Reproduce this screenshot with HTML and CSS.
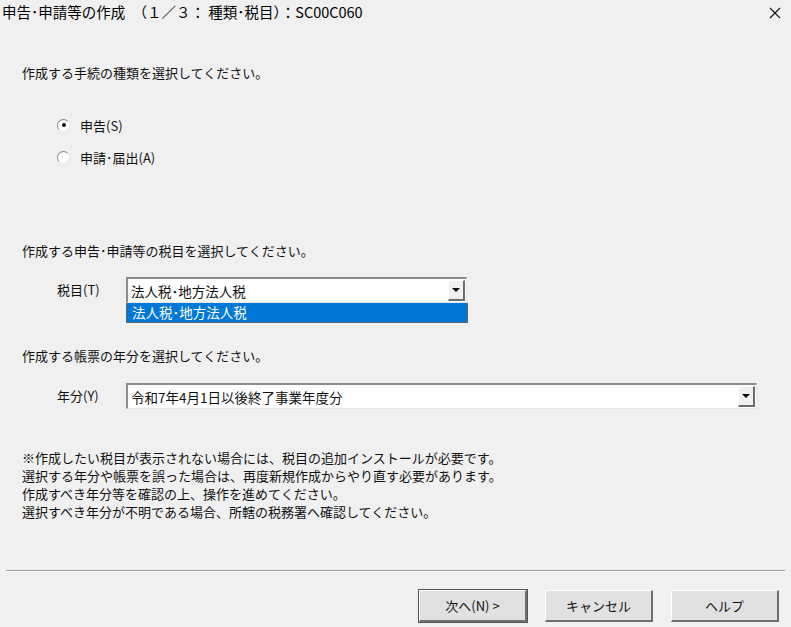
FILE: index.html
```html
<!DOCTYPE html>
<html lang="ja">
<head>
<meta charset="utf-8">
<title>申告･申請等の作成</title>
<link rel="stylesheet" href="styles.css">
</head>
<body>
<div class="window">
  <div class="titlebar">
    <span class="title">申告･申請等の作成　（１／３： 種類･税目）：SC00C060</span>
    <span class="close">
      <svg width="12" height="12" viewBox="0 0 12 12"><path d="M1 1 L11 11 M11 1 L1 11" stroke="#111" stroke-width="1.1" fill="none"/></svg>
    </span>
  </div>
  <div class="content">
    <p class="line first">作成する手続の種類を選択してください。</p>
    <div class="radios">
      <div class="radio-row"><span class="radio checked"></span><span>申告(S)</span></div>
      <div class="radio-row"><span class="radio"></span><span>申請･届出(A)</span></div>
    </div>
    <p class="line second">作成する申告･申請等の税目を選択してください。</p>
    <div class="field-row tax">
      <span class="label">税目(T)</span>
      <div class="combo narrow">
        <span class="combo-text">法人税･地方法人税</span>
        <span class="drop"><span class="arrow"></span></span>
        <div class="droplist">法人税･地方法人税</div>
      </div>
    </div>
    <p class="line third">作成する帳票の年分を選択してください。</p>
    <div class="field-row year">
      <span class="label">年分(Y)</span>
      <div class="combo wide">
        <span class="combo-text">令和7年4月1日以後終了事業年度分</span>
        <span class="drop"><span class="arrow"></span></span>
      </div>
    </div>
    <div class="notes">
      <p>※作成したい税目が表示されない場合には、税目の追加インストールが必要です。</p>
      <p>選択する年分や帳票を誤った場合は、再度新規作成からやり直す必要があります。</p>
      <p>作成すべき年分等を確認の上、操作を進めてください。</p>
      <p>選択すべき年分が不明である場合、所轄の税務署へ確認してください。</p>
    </div>
  </div>
  <div class="separator"></div>
  <div class="buttons">
    <button class="btn default">次へ(N) &gt;</button>
    <button class="btn">キャンセル</button>
    <button class="btn">ヘルプ</button>
  </div>
</div>
</body>
</html>
```
FILE: styles.css
```css
html, body {
  margin: 0;
  padding: 0;
  background: #f0f0f0;
}
body {
  font-family: "Noto Sans CJK JP", "Noto Sans", sans-serif;
  font-size: 13px;
  color: #111;
  width: 791px;
  height: 627px;
  overflow: hidden;
}
.window {
  display: flex;
  flex-direction: column;
  height: 627px;
}
.titlebar {
  height: 26px;
  display: flex;
  align-items: center;
  justify-content: space-between;
  padding: 0 10px 0 2px;
  font-size: 14.5px;
  color: #000;
}
.title { line-height: 20px; margin-top: -2px; }
.close { display: flex; align-items: center; margin-top: -1px; }
.content {
  padding-left: 22px;
  display: flex;
  flex-direction: column;
}
p { margin: 0; }
.line { line-height: 18px; }
.first { margin-top: 38px; }
.radios {
  margin-top: 34px;
  margin-left: 35px;
  display: flex;
  flex-direction: column;
  gap: 14px;
}
.radio-row {
  display: flex;
  align-items: center;
  height: 18px;
  gap: 10px;
}
.radio {
  width: 11px;
  height: 11px;
  border-radius: 50%;
  border: 1px solid #8a8a8a;
  border-right-color: #e8e8e8;
  border-bottom-color: #e8e8e8;
  background: #fff;
  position: relative;
  box-sizing: content-box;
}
.radio.checked::after {
  content: "";
  position: absolute;
  left: 3.5px;
  top: 3.5px;
  width: 4px;
  height: 4px;
  border-radius: 50%;
  background: #111;
}
.second { margin-top: 76px; }
.field-row {
  display: flex;
  align-items: center;
  margin-left: 35px;
}
.tax { margin-top: 17px; }
.label { width: 69px; line-height: 18px; }
.combo {
  position: relative;
  height: 26px;
  box-sizing: border-box;
  background: #fff;
  border-top: 2px solid #8c8c8c;
  border-left: 2px solid #8c8c8c;
  border-right: 1px solid #e6e6e6;
  border-bottom: 1px solid #e6e6e6;
  display: flex;
  align-items: center;
}
.narrow { width: 341px; }
.wide { width: 631px; }
.combo-text {
  flex: 1;
  padding-left: 3px;
  font-size: 13.5px;
  line-height: 20px;
}
.drop {
  width: 17px;
  height: 21px;
  box-sizing: border-box;
  margin-right: 1px;
  background: #f0f0f0;
  border-top: 1px solid #fff;
  border-left: 1px solid #fff;
  border-right: 2px solid #6b6b6b;
  border-bottom: 2px solid #6b6b6b;
  display: flex;
  align-items: center;
  justify-content: center;
}
.arrow {
  width: 0;
  height: 0;
  border-left: 4px solid transparent;
  border-right: 4px solid transparent;
  border-top: 4px solid #000;
}
.droplist {
  position: absolute;
  left: -2px;
  top: 24px;
  width: 342px;
  height: 20px;
  box-sizing: border-box;
  background: #0078d7;
  color: #fff;
  padding-left: 5px;
  font-size: 13.5px;
  line-height: 19px;
  border: 1px solid #646464;
  border-top: none;
}
.third { margin-top: 44px; }
.year { margin-top: 18px; }
.notes {
  margin-top: 40px;
  line-height: 18px;
}
.separator {
  margin: 49px 6px 0 6px;
  height: 1px;
  background: #a0a0a0;
  border-bottom: 1px solid #ffffff;
}
.buttons {
  display: flex;
  justify-content: flex-end;
  gap: 18px;
  margin-top: 18px;
  padding-right: 12px;
}
.btn {
  width: 108px;
  height: 32px;
  font-family: "Noto Sans CJK JP", "Noto Sans", sans-serif;
  font-size: 13px;
  color: #111;
  background: #e1e1e1;
  border-top: 1px solid #fdfdfd;
  border-left: 1px solid #fdfdfd;
  border-right: 2px solid #6f6f6f;
  border-bottom: 2px solid #6f6f6f;
  padding: 0;
}
.btn.default {
  outline: 1px solid #555;
}
```
